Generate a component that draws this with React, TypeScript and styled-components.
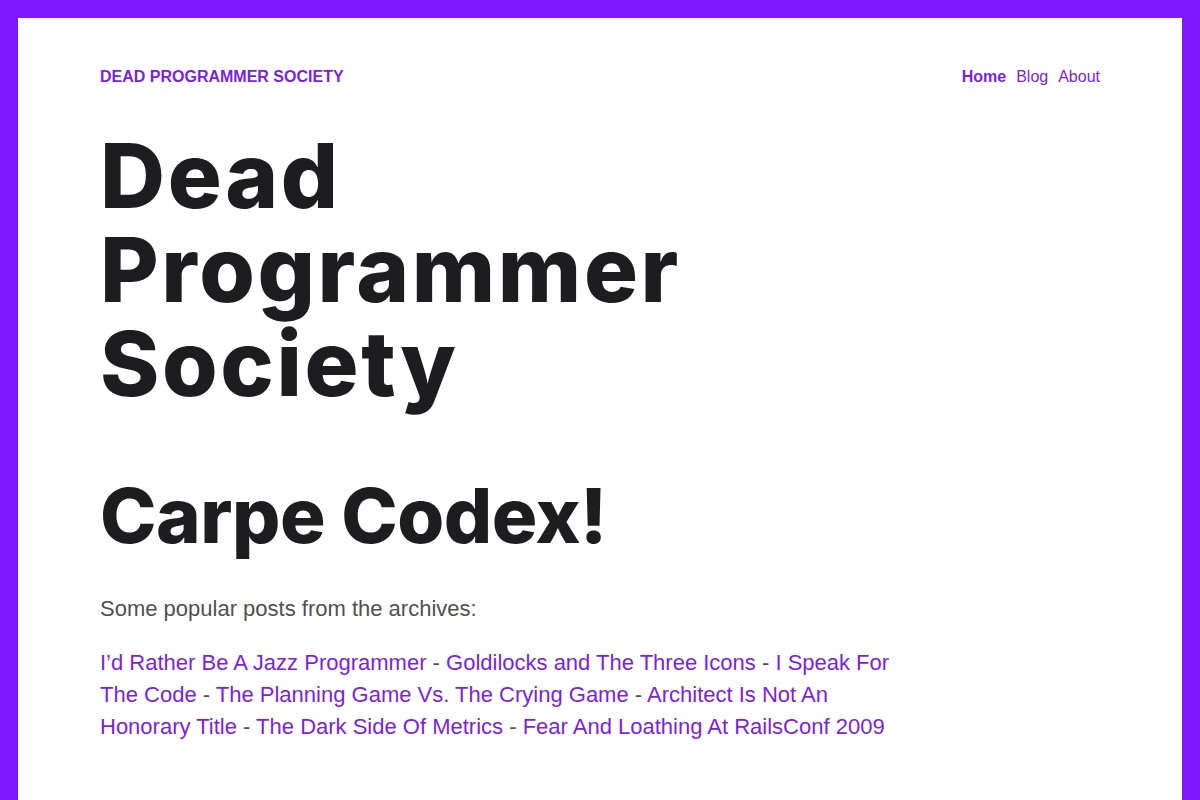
import React from "react";
import styled, { createGlobalStyle } from "styled-components";

const Global = createGlobalStyle`
  html, body { margin: 0; padding: 0; background: #7f17ff; }
  body { font-family: "Liberation Sans", Arial, sans-serif; }
`;

const Frame = styled.div`
  box-sizing: border-box;
  min-height: 800px;
  padding: 18px 18px 0 18px;
  background: #7f17ff;
`;

const Page = styled.div`
  background: #fff;
  min-height: 782px;
  padding: 0 82px;
  box-sizing: border-box;
`;

const Header = styled.header`
  display: flex;
  justify-content: space-between;
  align-items: center;
  padding-top: 49px;
  height: 19px;
`;

const Brand = styled.a`
  font-size: 16px;
  font-weight: 700;
  color: #7a1fe6;
  text-decoration: none;
  text-transform: uppercase;
`;

const Nav = styled.nav`
  display: flex;
  gap: 10px;
`;

const NavLink = styled.a<{ $active?: boolean }>`
  font-size: 16px;
  font-weight: ${(p) => (p.$active ? 700 : 400)};
  color: #7a1fe6;
  text-decoration: none;
`;

const Title = styled.h1`
  font-family: "Inter", sans-serif;
  font-weight: 800;
  font-size: 90px;
  line-height: 94px;
  letter-spacing: 2.6px;
  color: #1d1d1f;
  margin: 43px 0 0 0;
`;

const Subtitle = styled.h2`
  font-family: "Inter", sans-serif;
  font-weight: 800;
  font-size: 76px;
  line-height: 90px;
  letter-spacing: -0.5px;
  color: #1d1d1f;
  margin: 59px 0 0 0;
`;

const Lead = styled.p`
  font-size: 22px;
  line-height: 32px;
  color: #505050;
  margin: 33px 0 0 0;
`;

const Posts = styled.p`
  font-size: 22px;
  line-height: 32px;
  color: #505050;
  margin: 22px 0 0 0;
  max-width: 800px;
`;

const PostLink = styled.a`
  color: #7a1fe6;
  text-decoration: none;
`;

const posts = [
  "I’d Rather Be A Jazz Programmer",
  "Goldilocks and The Three Icons",
  "I Speak For The Code",
  "The Planning Game Vs. The Crying Game",
  "Architect Is Not An Honorary Title",
  "The Dark Side Of Metrics",
  "Fear And Loathing At RailsConf 2009",
];

export default function App() {
  return (
    <>
      <Global />
      <Frame>
        <Page>
          <Header>
            <Brand href="#">Dead Programmer Society</Brand>
            <Nav>
              <NavLink href="#" $active>Home</NavLink>
              <NavLink href="#">Blog</NavLink>
              <NavLink href="#">About</NavLink>
            </Nav>
          </Header>
          <Title>
            Dead
            <br />
            Programmer
            <br />
            Society
          </Title>
          <Subtitle>Carpe Codex!</Subtitle>
          <Lead>Some popular posts from the archives:</Lead>
          <Posts>
            {posts.map((p, i) => (
              <React.Fragment key={p}>
                {i > 0 && " - "}
                <PostLink href="#">{p}</PostLink>
              </React.Fragment>
            ))}
          </Posts>
        </Page>
      </Frame>
    </>
  );
}
